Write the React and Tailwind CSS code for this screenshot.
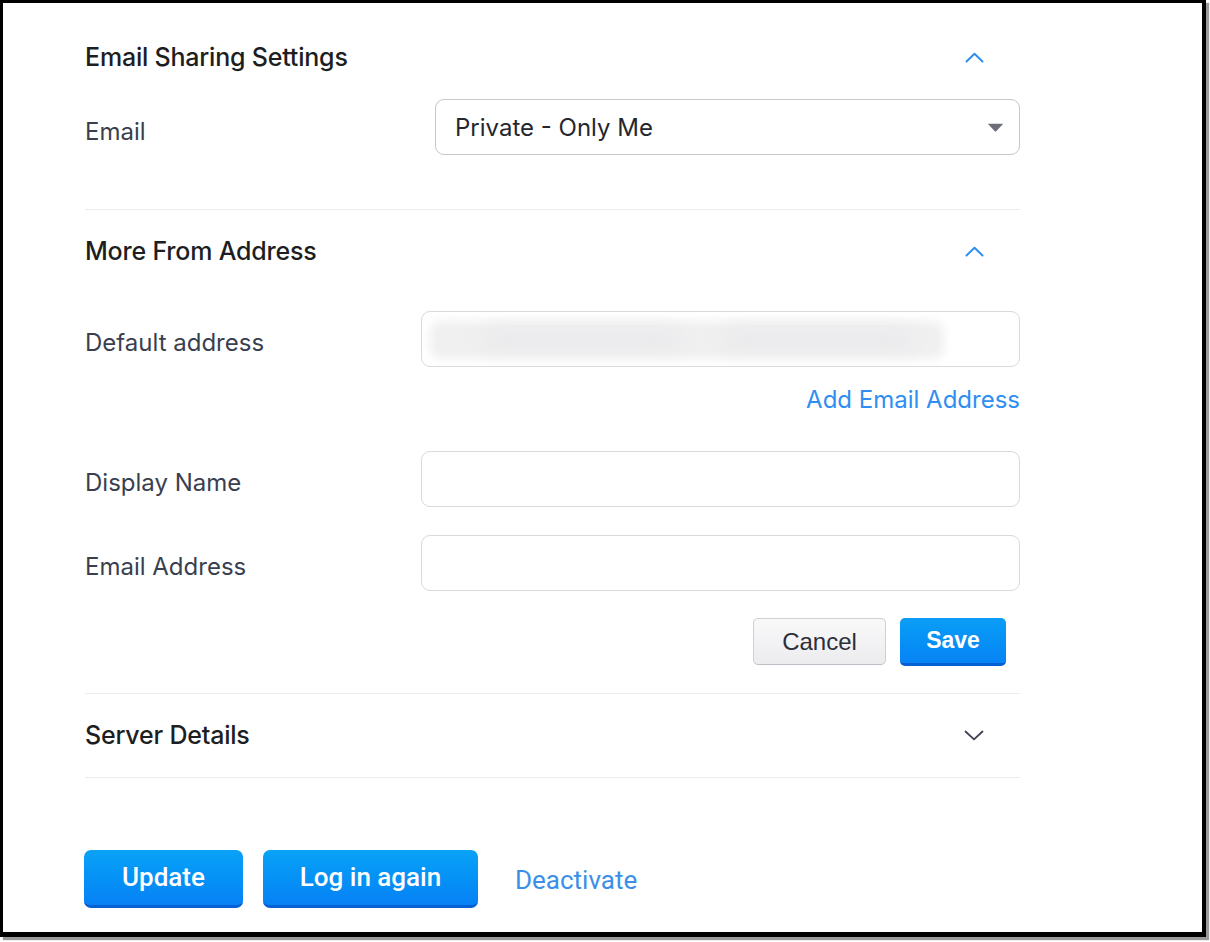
import React from "react";

const ChevronUp = () => (
  <svg width="19" height="11" viewBox="0 0 19 11" fill="none">
    <path d="M1.5 9.5L9.5 1.8L17.5 9.5" stroke="#2f8ef2" strokeWidth="2" strokeLinecap="round" strokeLinejoin="round" />
  </svg>
);

const ChevronDown = () => (
  <svg width="20" height="11" viewBox="0 0 20 11" fill="none">
    <path d="M1.5 1.5L10 9.3L18.5 1.5" stroke="#3c4150" strokeWidth="1.8" strokeLinecap="round" strokeLinejoin="round" />
  </svg>
);

const Caret = () => (
  <svg width="17" height="9" viewBox="0 0 17 9">
    <path d="M0.8 0.8H16.2L9.2 8.2Q8.5 8.9 7.8 8.2Z" fill="#6c6f7a" />
  </svg>
);

function SectionHeader({ title, open }) {
  return (
    <div className="flex h-[40px] items-center justify-between">
      <h2 className="pt-[2px] text-[25px] font-medium text-[#1d1e22] tracking-[-0.2px]">{title}</h2>
      <div className="mr-[36px] flex w-[20px] items-center justify-center">
        {open ? <ChevronUp /> : <ChevronDown />}
      </div>
    </div>
  );
}

function FieldRow({ label, children, className = "" }) {
  return (
    <div className={"flex items-center " + className}>
      <div className="w-[336px] pt-[8px] text-[24px] text-[#3a3f50]">{label}</div>
      <div className="flex-1">{children}</div>
    </div>
  );
}

const TextBox = ({ children }) => (
  <div className="relative h-[56px] w-full overflow-hidden rounded-[9px] border border-[#d9d9de] bg-white">
    {children}
  </div>
);

export default function App() {
  return (
    <div className="h-[942px] w-[1210px] bg-white" style={{ fontFamily: "Inter, 'Noto Sans', sans-serif" }}>
      <div className="h-[937px] w-[1206px] border-b-[5px] border-l-[3px] border-r-[4px] border-t-[3px] border-black bg-white shadow-[3px_3px_1px_#9a9a9a]">
        <div className="w-[935px] pl-[82px] pt-[34px]" style={{ boxSizing: "content-box" }}>
          {/* Email sharing */}
          <SectionHeader title="Email Sharing Settings" open />
          <div className="mt-[22px] flex items-center">
            <div className="w-[350px] pt-[10px] text-[24px] text-[#3a3f50]">Email</div>
            <div className="flex h-[56px] flex-1 items-center justify-between rounded-[9px] border border-[#c6c6cc] pl-[19px] pr-[15px]">
              <span className="pt-[1px] text-[24px] text-[#25272f]">Private - Only Me</span>
              <Caret />
            </div>
          </div>
          <div className="mt-[54px] h-px bg-[#ececee]" />

          {/* More from address */}
          <div className="mt-[21px]">
            <SectionHeader title="More From Address" open />
          </div>
          <FieldRow label="Default address" className="mt-[40px]">
            <TextBox>
              <div className="absolute left-[8px] top-[9px] h-[38px] w-[514px] rounded-[10px] bg-[#f0f0f1] blur-[5px]" />
              <div className="absolute left-[60px] top-[17px] h-[20px] w-[200px] rounded-full bg-[#eaeaec] blur-[9px]" />
              <div className="absolute left-[300px] top-[17px] h-[20px] w-[190px] rounded-full bg-[#eaeaec] blur-[9px]" />
            </TextBox>
          </FieldRow>
          <div className="mt-[20px] flex justify-end">
            <span className="text-[24px] leading-[26px] text-[#2f8ef2]">Add Email Address</span>
          </div>
          <FieldRow label="Display Name" className="mt-[38px]">
            <TextBox />
          </FieldRow>
          <FieldRow label="Email Address" className="mt-[28px]">
            <TextBox />
          </FieldRow>
          <div className="mt-[27px] flex justify-end gap-[14px] pr-[14px]" style={{ fontFamily: "'Liberation Sans', Arial, sans-serif" }}>
            <button className="h-[47px] w-[133px] rounded-[5px] border border-[#cfcfd5] border-b-[#bfbfc7] bg-gradient-to-b from-[#f9f9fa] to-[#ececef] text-[24px] text-[#2c2f3a]">
              Cancel
            </button>
            <button className="h-[48px] w-[106px] rounded-[5px] border-b-[3px] border-[#0360d2] bg-gradient-to-b from-[#0b9ef6] to-[#0783f4] text-[23px] font-bold text-white">
              Save
            </button>
          </div>
          <div className="mt-[27px] h-px bg-[#ececee]" />

          {/* Server details */}
          <div className="mt-[21px]">
            <SectionHeader title="Server Details" />
          </div>
          <div className="mt-[22px] h-px bg-[#ececee]" />

          {/* Account actions */}
          <div className="mt-[72px] flex items-center" style={{ fontFamily: "Roboto, 'Liberation Sans', sans-serif" }}>
            <button className="-ml-[1px] h-[58px] w-[159px] rounded-[7px] border-b-[3px] border-[#0462d4] bg-gradient-to-b from-[#0aa2f6] to-[#0881f5] text-[26px] font-medium text-white">
              Update
            </button>
            <button className="ml-[20px] h-[58px] w-[215px] rounded-[7px] border-b-[3px] border-[#0462d4] bg-gradient-to-b from-[#0aa2f6] to-[#0881f5] text-[26px] font-medium text-white">
              Log in again
            </button>
            <span className="ml-[37px] pt-[2px] text-[26px] text-[#3b8fe8]">Deactivate</span>
          </div>
        </div>
      </div>
    </div>
  );
}
